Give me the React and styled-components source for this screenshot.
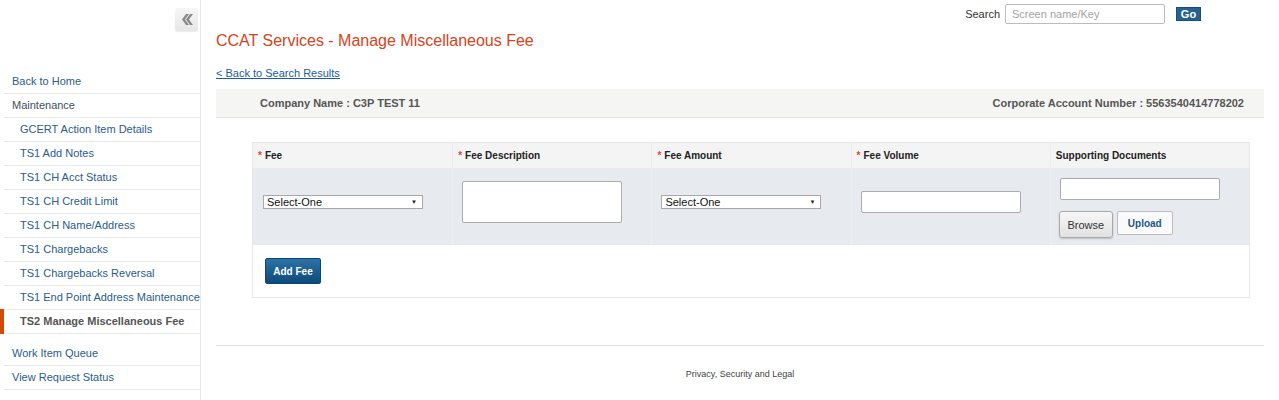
import React from 'react';
import styled, { createGlobalStyle } from 'styled-components';

const GlobalStyle = createGlobalStyle`
	html, body {
		margin: 0;
		padding: 0;
		background: #fff;
		font-family: "Liberation Sans", Arial, sans-serif;
	}
	* {
		box-sizing: border-box;
	}
`;

const Page = styled.div`
	display: flex;
	width: 1279px;
	min-height: 400px;
`;

const Sidebar = styled.aside`
	width: 201px;
	flex-shrink: 0;
	border-right: 1px solid #e9e9e9;
	display: flex;
	flex-direction: column;
`;

const SidebarTop = styled.div`
	height: 70px;
	display: flex;
	justify-content: flex-end;
	align-items: flex-start;
	padding: 8px 2px 0 0;
`;

const CollapseButton = styled.button`
	width: 23px;
	height: 23px;
	padding: 0;
	border: none;
	border-radius: 2px;
	background: linear-gradient(#f6f6f6, #e7e7e7);
	box-shadow: 0 1px 1px rgba(0, 0, 0, 0.08);
	display: flex;
	align-items: center;
	justify-content: center;
`;

const NavList = styled.ul`
	list-style: none;
	margin: 0;
	padding: 0 0 0 4px;
`;

const NavItem = styled.li`
	position: relative;
	height: 24px;
	line-height: 23px;
	border-bottom: 1px solid #e9e9e9;
	padding-left: ${(p) => (p.$sub ? '16px' : '8px')};
	margin-top: ${(p) => (p.$gap ? '8px' : '0')};
	font-size: 11px;
	font-weight: ${(p) => (p.$active ? 'bold' : 'normal')};
	color: ${(p) => (p.$active ? '#555' : p.$plain ? '#444f5c' : '#2a5c8c')};
	white-space: nowrap;

	${(p) =>
		p.$active &&
		`
		&::before {
			content: '';
			position: absolute;
			left: -4px;
			top: -1px;
			width: 4px;
			height: 25px;
			background: #d24a05;
		}
	`}
`;

const Main = styled.main`
	flex: 1;
	padding: 0 15px 0 15px;
	display: flex;
	flex-direction: column;
`;

const SearchRow = styled.div`
	display: flex;
	justify-content: flex-end;
	align-items: center;
	gap: 5px;
	height: 20px;
	margin-top: 4px;
	padding-right: 63px;
	font-size: 11px;
	color: #333;
`;

const SearchInput = styled.input`
	width: 160px;
	height: 20px;
	border: 1px solid #bcbcbc;
	border-radius: 2px;
	padding: 0 6px;
	font-family: inherit;
	font-size: 11px;
	&::placeholder {
		color: #a3a3a3;
	}
`;

const GoButton = styled.button`
	margin-left: 6px;
	width: 25px;
	height: 14px;
	padding: 0;
	border: 1px solid #1b4c72;
	background: #266191;
	color: #fff;
	font-family: inherit;
	font-weight: bold;
	font-size: 11px;
	line-height: 12px;
`;

const Title = styled.h1`
	margin: 7px 0 0;
	font-size: 16px;
	line-height: 20px;
	font-weight: normal;
	color: #d5441d;
`;

const BackLink = styled.a`
	margin-top: 16px;
	align-self: flex-start;
	font-size: 11px;
	line-height: 12px;
	color: #1d5d98;
	text-decoration: underline;
`;

const InfoBar = styled.div`
	margin-top: 10px;
	height: 29px;
	display: flex;
	justify-content: space-between;
	align-items: center;
	padding: 0 20px 0 44px;
	background: #f5f5f3;
	border-bottom: 1px solid #e3e3e3;
	font-size: 11px;
	font-weight: bold;
	color: #555;
`;

const FeeTable = styled.div`
	margin: 24px 14px 0 36px;
	border: 1px solid #e6e6e6;
`;

const Grid = styled.div`
	display: grid;
	grid-template-columns: repeat(5, 1fr);
`;

const HeadCell = styled.div`
	height: 25px;
	line-height: 25px;
	padding-left: 5px;
	background: #f4f4f4;
	border-left: ${(p) => (p.$first ? 'none' : '1px solid #ececec')};
	font-size: 10px;
	font-weight: bold;
	color: #222;
	white-space: nowrap;
`;

const Req = styled.span`
	color: #e8433a;
	margin-right: 3px;
`;

const BodyCell = styled.div`
	height: 77px;
	padding: 0 10px 9px ${(p) => (p.$first ? '10px' : '9px')};
	background: #e7ebef;
	border-left: ${(p) => (p.$first ? 'none' : '1px solid #edf0f3')};
	display: flex;
	flex-direction: column;
	justify-content: center;
	align-items: flex-start;
`;

const DocsCell = styled(BodyCell)`
	justify-content: flex-start;
	padding-top: 10px;
	padding-bottom: 0;
`;

const SelectWrap = styled.span`
	position: relative;
	display: block;
	width: 160px;
	height: 14px;
	&::after {
		content: '▼';
		position: absolute;
		right: 6px;
		top: 2px;
		font-size: 6px;
		line-height: 10px;
		color: #222;
		pointer-events: none;
	}
`;

const Select = styled.select`
	appearance: none;
	display: block;
	width: 160px;
	height: 14px;
	margin: 0;
	padding: 0 0 0 3px;
	border: 1px solid #a8a8a8;
	border-radius: 0;
	background: #fff;
	font-family: inherit;
	font-size: 11px;
	line-height: 12px;
	color: #111;
`;

const TextArea = styled.textarea`
	display: block;
	width: 160px;
	height: 42px;
	margin: 0;
	border: 1px solid #acacac;
	border-radius: 2px;
	resize: none;
	background: #fff;
`;

const TextInput = styled.input`
	display: block;
	width: 160px;
	height: 22px;
	margin: 0;
	border: 1px solid #acacac;
	border-radius: 2px;
	background: #fff;
`;

const ButtonRow = styled.div`
	display: flex;
	align-items: flex-start;
	gap: 4px;
	margin: 11px 0 0 -1px;
`;

const BrowseButton = styled.button`
	width: 54px;
	height: 27px;
	padding: 0;
	border: 1px solid #a9a9a9;
	border-radius: 3px;
	background: linear-gradient(#f7f7f7, #e1e1e1);
	box-shadow: 0 1px 2px rgba(0, 0, 0, 0.2);
	font-family: inherit;
	font-size: 11px;
	color: #333;
`;

const UploadButton = styled.button`
	width: 56px;
	height: 24px;
	padding: 0;
	border: 1px solid #bcbcbc;
	border-radius: 2px;
	background: #fafafa;
	font-family: inherit;
	font-size: 10px;
	font-weight: bold;
	color: #1d5688;
`;

const TableFooter = styled.div`
	padding: 13px 0 13px 12px;
`;

const AddButton = styled.button`
	display: block;
	width: 56px;
	height: 26px;
	padding: 0;
	border: 1px solid #0d4472;
	border-radius: 2px;
	background: linear-gradient(#2c72a6, #0c4a7d);
	color: #fff;
	font-family: inherit;
	font-size: 10px;
	font-weight: bold;
`;

const Footer = styled.footer`
	margin-top: 47px;
	border-top: 1px solid #e2e2e2;
	padding-top: 23px;
	text-align: center;
	font-size: 9px;
	color: #444;
`;

const sideItems = [
	{ label: 'Back to Home' },
	{ label: 'Maintenance', plain: true },
	{ label: 'GCERT Action Item Details', sub: true },
	{ label: 'TS1 Add Notes', sub: true },
	{ label: 'TS1 CH Acct Status', sub: true },
	{ label: 'TS1 CH Credit Limit', sub: true },
	{ label: 'TS1 CH Name/Address', sub: true },
	{ label: 'TS1 Chargebacks', sub: true },
	{ label: 'TS1 Chargebacks Reversal', sub: true },
	{ label: 'TS1 End Point Address Maintenance', sub: true },
	{ label: 'TS2 Manage Miscellaneous Fee', sub: true, active: true },
	{ label: 'Work Item Queue', gap: true },
	{ label: 'View Request Status' },
];

const CollapseIcon = () => (
	<svg width="12" height="11" viewBox="0 0 12 11">
		<polygon points="5,0 8,0 4,5.5 8,11 5,11 1,5.5" fill="#8b8b8b" />
		<polygon points="9,0 12,0 8,5.5 12,11 9,11 5,5.5" fill="#8b8b8b" />
	</svg>
);

export default function App() {
	return (
		<>
			<GlobalStyle />
			<Page>
				<Sidebar>
					<SidebarTop>
						<CollapseButton aria-label="collapse">
							<CollapseIcon />
						</CollapseButton>
					</SidebarTop>
					<NavList>
						{sideItems.map((item) => (
							<NavItem
								key={item.label}
								$sub={item.sub}
								$active={item.active}
								$plain={item.plain}
								$gap={item.gap}
							>
								{item.label}
							</NavItem>
						))}
					</NavList>
				</Sidebar>

				<Main>
					<SearchRow>
						<span>Search</span>
						<SearchInput placeholder="Screen name/Key" />
						<GoButton>Go</GoButton>
					</SearchRow>

					<Title>CCAT Services - Manage Miscellaneous Fee</Title>
					<BackLink href="#">&lt; Back to Search Results</BackLink>

					<InfoBar>
						<span>Company Name : C3P TEST 11</span>
						<span>Corporate Account Number : 5563540414778202</span>
					</InfoBar>

					<FeeTable>
						<Grid>
							<HeadCell $first><Req>*</Req>Fee</HeadCell>
							<HeadCell><Req>*</Req>Fee Description</HeadCell>
							<HeadCell><Req>*</Req>Fee Amount</HeadCell>
							<HeadCell><Req>*</Req>Fee Volume</HeadCell>
							<HeadCell>Supporting Documents</HeadCell>

							<BodyCell $first>
								<SelectWrap>
									<Select defaultValue="">
										<option value="">Select-One</option>
									</Select>
								</SelectWrap>
							</BodyCell>
							<BodyCell>
								<TextArea />
							</BodyCell>
							<BodyCell>
								<SelectWrap>
									<Select defaultValue="">
										<option value="">Select-One</option>
									</Select>
								</SelectWrap>
							</BodyCell>
							<BodyCell>
								<TextInput />
							</BodyCell>
							<DocsCell>
								<TextInput />
								<ButtonRow>
									<BrowseButton>Browse</BrowseButton>
									<UploadButton>Upload</UploadButton>
								</ButtonRow>
							</DocsCell>
						</Grid>
						<TableFooter>
							<AddButton>Add Fee</AddButton>
						</TableFooter>
					</FeeTable>

					<Footer>Privacy, Security and Legal</Footer>
				</Main>
			</Page>
		</>
	);
}
